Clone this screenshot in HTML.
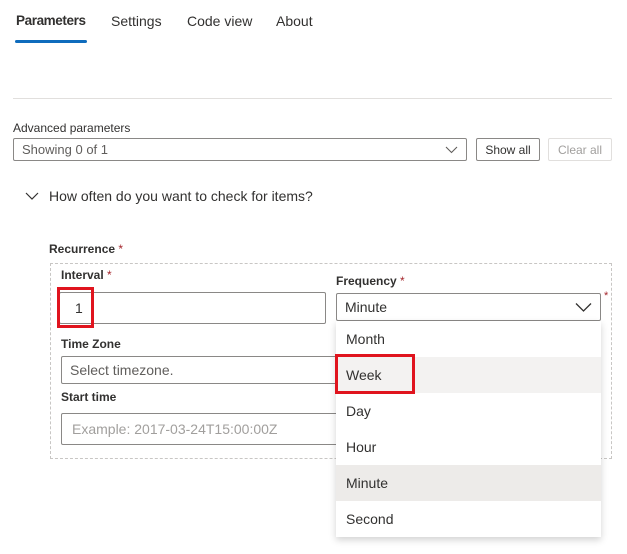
<!DOCTYPE html>
<html><head><style>
*{box-sizing:border-box;margin:0;padding:0}
body{width:627px;height:554px;background:#fff;font-family:"Liberation Sans",sans-serif;color:#323130;position:relative;overflow:hidden}
.a{position:absolute}
.tab{position:absolute;top:13px;font-size:14px;color:#323130}
.lbl{position:absolute;font-size:12px;font-weight:bold;color:#323130}
.req{color:#a4262c;font-weight:normal}
.inp{position:absolute;border:1px solid #8a8886;border-radius:2px;background:#fff;font-size:14px;padding-left:8px;display:flex;align-items:center}
.btn{position:absolute;border:1px solid #8a8886;border-radius:2px;font-size:12px;display:flex;align-items:center;justify-content:center;height:23px;top:138px}
.it{position:absolute;left:336px;width:265px;height:36px;font-size:14px;padding-left:10px;display:flex;align-items:center}
</style></head><body>
<div class="tab" style="left:16px;font-weight:bold;font-size:13.5px;letter-spacing:-0.4px">Parameters</div>
<div class="tab" style="left:111px">Settings</div>
<div class="tab" style="left:187px">Code view</div>
<div class="tab" style="left:276px">About</div>
<div class="a" style="left:15px;top:40px;width:72px;height:3px;background:#0f6cbd;border-radius:2px"></div>
<div class="a" style="left:13px;top:98px;width:599px;height:1px;background:#e1dfdd"></div>
<div class="a" style="left:13px;top:121px;font-size:12px">Advanced parameters</div>
<div class="inp" style="left:13px;top:138px;width:454px;height:23px;font-size:13px;color:#605e5c">Showing 0 of 1
<svg class="a" style="right:8px;top:6px" width="13" height="9" viewBox="0 0 13 9"><path d="M1 2l5.5 5.5L12 2" fill="none" stroke="#605e5c" stroke-width="1.1"/></svg></div>
<div class="btn" style="left:476px;width:64px">Show all</div>
<div class="btn" style="left:548px;width:64px;border-color:#e1dfdd;color:#a19f9d">Clear all</div>
<svg class="a" style="left:24px;top:191px" width="16" height="10" viewBox="0 0 16 10"><path d="M2 2l6 6 6-6" fill="none" stroke="#323130" stroke-width="1.2"/></svg>
<div class="a" style="left:49px;top:188px;font-size:14px">How often do you want to check for items?</div>
<div class="lbl" style="left:49px;top:242px">Recurrence <span class="req">*</span></div>
<div class="a" style="left:50px;top:263px;width:562px;height:196px;border:1px dashed #c8c6c4"></div>
<div class="lbl" style="left:61px;top:268px">Interval <span class="req">*</span></div>
<div class="inp" style="left:59px;top:292px;width:267px;height:32px;padding-left:15px">1</div>
<div class="a" style="left:57px;top:287px;width:37px;height:41px;border:3px solid #e0141e"></div>
<div class="lbl" style="left:336px;top:274px">Frequency <span class="req">*</span></div>
<div class="a" style="left:604px;top:290px;font-size:11px;color:#a4262c">*</div>
<div class="inp" style="left:336px;top:293px;width:265px;height:28px">Minute
<svg class="a" style="right:8px;top:8px" width="17" height="11" viewBox="0 0 17 11"><path d="M1 1.5l7.5 7.5L16 1.5" fill="none" stroke="#323130" stroke-width="1.3"/></svg></div>
<div class="lbl" style="left:61px;top:337px">Time Zone</div>
<div class="inp" style="left:61px;top:356px;width:290px;height:28px;color:#605e5c">Select timezone.</div>
<div class="lbl" style="left:61px;top:390px">Start time</div>
<div class="inp" style="left:61px;top:413px;width:290px;height:32px;color:#a19f9d;padding-left:10px">Example: 2017-03-24T15:00:00Z</div>
<div class="a" style="left:336px;top:321px;width:265px;height:216px;background:#fff;box-shadow:0 3px 7px rgba(0,0,0,.18)"></div>
<div class="it" style="top:321px">Month</div>
<div class="it" style="top:357px;background:#f3f2f1">Week</div>
<div class="it" style="top:393px">Day</div>
<div class="it" style="top:429px">Hour</div>
<div class="it" style="top:465px;background:#edebe9">Minute</div>
<div class="it" style="top:501px">Second</div>
<div class="a" style="left:335px;top:354px;width:80px;height:40px;border:3px solid #e0141e"></div>
</body></html>
